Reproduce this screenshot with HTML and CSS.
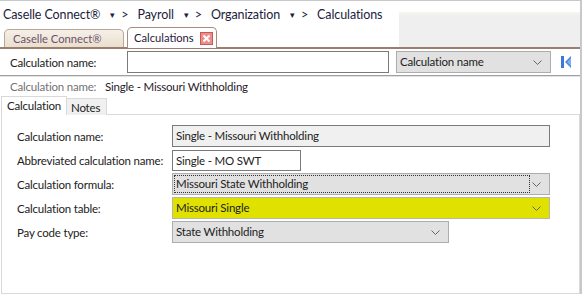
FILE: index.html
```html
<!DOCTYPE html>
<html lang="en">
<head>
  <meta charset="UTF-8">
  <title>Calculations</title>
  <link rel="stylesheet" href="styles.css">
</head>
<body>
  <div class="window">
    <div class="top">
      <div class="nav">
        <div class="crumbs">
          <span class="crumb">Caselle Connect®</span><span class="drop">▾</span><span class="sep">&gt;</span>
          <span class="crumb">Payroll</span><span class="drop">▾</span><span class="sep">&gt;</span>
          <span class="crumb">Organization</span><span class="drop">▾</span><span class="sep">&gt;</span>
          <span class="crumb">Calculations</span>
        </div>
        <div class="doc-tabs">
          <div class="doc-tab">Caselle Connect®</div>
          <div class="doc-tab active"><span>Calculations</span>
            <span class="close">
              <svg width="13" height="13" viewBox="0 0 13 13">
                <rect x="0.5" y="0.5" width="12" height="12" fill="#ef8d8d" stroke="#c9585a"/>
                <path d="M3.5 3.5 L9.5 9.5 M9.5 3.5 L3.5 9.5" stroke="#fff" stroke-width="2"/>
              </svg>
            </span>
          </div>
        </div>
      </div>
      <div class="filler"></div>
    </div>

    <div class="search">
      <label class="search-label">Calculation name:</label>
      <input class="search-input" type="text">
      <div class="select search-select">Calculation name
        <svg class="chev" width="9" height="5" viewBox="0 0 9 5"><path d="M0.5 0.5 L4.5 4.5 L8.5 0.5" fill="none" stroke="#666"/></svg>
      </div>
      <svg class="first" width="12" height="14" viewBox="0 0 12 14">
        <rect x="1" y="1" width="3" height="12" fill="#3f77d6"/>
        <path d="M11 1 L5 7 L11 13 Z" fill="#4a86e0"/>
        <path d="M11 3 L7 7 L11 11 Z" fill="#7fb0f0"/>
      </svg>
    </div>

    <div class="info">
      <span class="info-label">Calculation name:</span>
      <span class="info-value">Single - Missouri Withholding</span>
    </div>

    <div class="sub-tabs">
      <div class="sub-tab active">Calculation</div>
      <div class="sub-tab">Notes</div>
      <div class="sub-line"></div>
    </div>

    <div class="panel">
      <div class="row">
        <label>Calculation name:</label>
        <div class="field readonly wide">Single - Missouri Withholding</div>
      </div>
      <div class="row">
        <label>Abbreviated calculation name:</label>
        <div class="field short">Single - MO SWT</div>
      </div>
      <div class="row">
        <label>Calculation formula:</label>
        <div class="select wide focused"><span class="focus">Missouri State Withholding</span>
          <svg class="chev" width="9" height="5" viewBox="0 0 9 5"><path d="M0.5 0.5 L4.5 4.5 L8.5 0.5" fill="none" stroke="#666"/></svg>
        </div>
      </div>
      <div class="row">
        <label>Calculation table:</label>
        <div class="select wide marked">Missouri Single
          <svg class="chev" width="9" height="5" viewBox="0 0 9 5"><path d="M0.5 0.5 L4.5 4.5 L8.5 0.5" fill="none" stroke="#666"/></svg>
        </div>
      </div>
      <div class="row">
        <label>Pay code type:</label>
        <div class="select medium">State Withholding
          <svg class="chev" width="9" height="5" viewBox="0 0 9 5"><path d="M0.5 0.5 L4.5 4.5 L8.5 0.5" fill="none" stroke="#666"/></svg>
        </div>
      </div>
    </div>
  </div>
</body>
</html>
```

FILE: styles.css
```css
*{
  margin:0;
  padding:0;
  box-sizing: border-box;
}
body {
  font-family: 'Lato', 'Liberation Sans', sans-serif;
  font-size: 11.5px;
  letter-spacing: -0.2px;
  color: #222;
  background: #fff;
  white-space: nowrap;
}
.window{
  width: 582px;
  height: 294px;
  border-top: 1px solid #c8c8c8;
  border-right: 2px solid #c8c8c8;
  display: flex;
  flex-direction: column;
}
.top{
  display: flex;
  height: 48px;
  border-bottom: 2px solid #9c7e6e;
}
.nav{
  width: 399px;
  background: #fff;
  display: flex;
  flex-direction: column;
}
.filler{
  flex: 1;
  margin-top: 11px;
  background: linear-gradient(#f7f5f1, #efefef 4px);
}
.crumbs{
  height: 26px;
  padding-left: 3px;
  display: flex;
  align-items: center;
  font-size: 12.5px;
  letter-spacing: -0.1px;
  color: #1c1c3c;
}
.drop{
  font-size: 9px;
  margin-left: 10px;
  margin-right: 6px;
}
.sep{
  margin-right: 9px;
}
.doc-tabs{
  display: flex;
  align-items: flex-end;
  padding-left: 4px;
  gap: 3px;
  flex: 1;
}
.doc-tab{
  height: 18px;
  width: 120px;
  padding-left: 8px;
  border: 1px solid #b9a696;
  border-bottom: none;
  border-radius: 5px 5px 0 0;
  background: linear-gradient(#f5f0e8, #e9dfcd);
  color: #6e4f6e;
  font-size: 11.2px;
  letter-spacing: 0;
  line-height: 17px;
}
.doc-tab.active{
  height: 21px;
  width: 90px;
  background: #fff;
  color: #2a1a3a;
  border-color: #a48d7d;
  padding: 0 3px 0 6px;
  line-height: 20px;
  display: flex;
  align-items: center;
  justify-content: space-between;
  margin-bottom: -1px;
}
.close{
  display: flex;
}
.search{
  height: 27px;
  display: flex;
  align-items: center;
  padding-left: 10px;
  border-bottom: 1px solid #a0a0a0;
  box-shadow: 0 1px 0 #e2e2e2;
}
.search-label{
  width: 117px;
}
.search-input{
  width: 262px;
  height: 22px;
  border: 1px solid #7a7a7a;
}
.select{
  position: relative;
  height: 22px;
  border: 1px solid #adadad;
  background: #e1e1e1;
  padding-left: 3px;
  line-height: 20px;
}
.chev{
  position: absolute;
  right: 8px;
  top: 8px;
}
.search-select{
  width: 155px;
  margin-left: 7px;
}
.first{
  margin-left: 9px;
}
.info{
  height: 20px;
  padding-left: 10px;
  display: flex;
  align-items: center;
  padding-top: 1px;
}
.info-label{
  color: #737373;
  width: 95px;
}
.info-value{
  color: #2a1a2a;
}
.sub-tabs{
  display: flex;
  align-items: flex-end;
  height: 19px;
  padding-left: 1px;
}
.sub-tab{
  height: 19px;
  padding: 0 5px;
  border: 1px solid #d9d9d9;
  border-bottom: none;
  line-height: 18px;
  background: #fff;
}
.sub-tab:not(.active){
  height: 17px;
  background: #f0f0f0;
  border-left: none;
  line-height: 18px;
  padding: 0 6px 0 4px;
}
.sub-line{
  flex: 1;
  border-bottom: 1px solid #d9d9d9;
}
.panel{
  flex: 1;
  margin-left: 1px;
  border: 1px solid #d9d9d9;
  border-top: none;
  padding: 10px 0 0 15px;
  display: flex;
  flex-direction: column;
  gap: 2px;
}
.row{
  display: flex;
  align-items: center;
  height: 22px;
}
.row label{
  width: 155px;
}
.field{
  height: 22px;
  border: 1px solid #7a7a7a;
  padding-left: 3px;
  line-height: 20px;
  background: #fff;
}
.readonly{
  background: #f0f0f0;
}
.wide{
  width: 378px;
}
.short{
  width: 129px;
  height: 21px;
}
.medium{
  width: 277px;
}
.focused{
  padding: 1px;
}
.focus{
  display: block;
  width: 356px;
  height: 18px;
  border: 1px dotted #333;
  padding-left: 1px;
  line-height: 16px;
}
.marked{
  background: #e1e100;
  border-color: #b8b8a0;
}
```
